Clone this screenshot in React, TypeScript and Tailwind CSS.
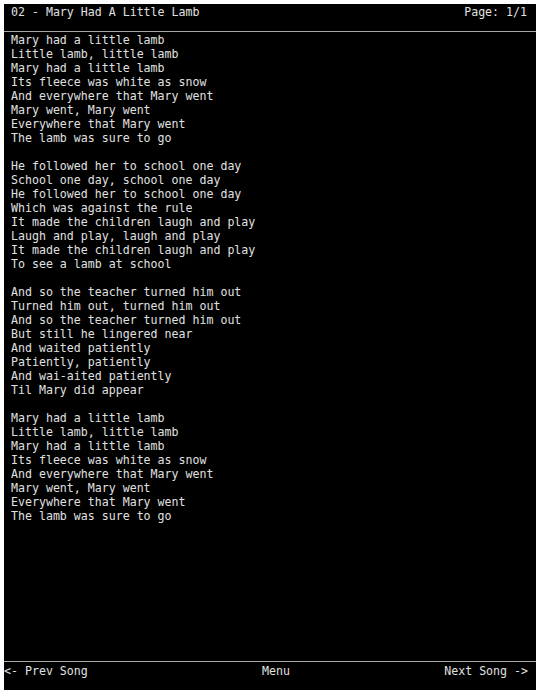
const lyrics = [
  "Mary had a little lamb",
  "Little lamb, little lamb",
  "Mary had a little lamb",
  "Its fleece was white as snow",
  "And everywhere that Mary went",
  "Mary went, Mary went",
  "Everywhere that Mary went",
  "The lamb was sure to go",
  "",
  "He followed her to school one day",
  "School one day, school one day",
  "He followed her to school one day",
  "Which was against the rule",
  "It made the children laugh and play",
  "Laugh and play, laugh and play",
  "It made the children laugh and play",
  "To see a lamb at school",
  "",
  "And so the teacher turned him out",
  "Turned him out, turned him out",
  "And so the teacher turned him out",
  "But still he lingered near",
  "And waited patiently",
  "Patiently, patiently",
  "And wai-aited patiently",
  "Til Mary did appear",
  "",
  "Mary had a little lamb",
  "Little lamb, little lamb",
  "Mary had a little lamb",
  "Its fleece was white as snow",
  "And everywhere that Mary went",
  "Mary went, Mary went",
  "Everywhere that Mary went",
  "The lamb was sure to go",
];

export default function App() {
  return (
    <div
      className="w-[540px] h-[696px] bg-white p-[4px] text-[11.6px] leading-[14px] text-[#e0e0e0]"
      style={{ fontFamily: '"DejaVu Sans Mono", monospace' }}
    >
      <div className="flex flex-col w-[532px] h-[686px] bg-black">
        <div className="flex justify-between pl-[7px] pr-[9px] pt-[1px] h-[27px]">
          <span>02 - Mary Had A Little Lamb</span>
          <span>Page: 1/1</span>
        </div>
        <div className="h-px bg-[#a8a8a8]" />
        <div className="flex-1 pl-[7px] pt-[1px]">
          {lyrics.map((line, i) => (
            <div key={i} className="h-[14px] whitespace-pre">
              {line}
            </div>
          ))}
        </div>
        <div className="h-px bg-[#a8a8a8]" />
        <div className="grid grid-cols-3 h-[28px] pt-[2px] pr-[8px]">
          <span>&lt;- Prev Song</span>
          <span className="text-center pl-[20px]">Menu</span>
          <span className="text-right">Next Song -&gt;</span>
        </div>
      </div>
    </div>
  );
}
